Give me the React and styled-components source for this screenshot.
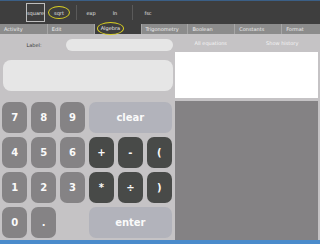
import React from 'react'
import styled, { createGlobalStyle } from 'styled-components'

const GlobalStyle = createGlobalStyle`
  html, body {
    margin: 0;
    padding: 0;
    background: #c5c3c5;
  }
  body {
    font-family: "DejaVu Sans", "Liberation Sans", sans-serif;
  }
`

const Screen = styled.div`
  width: 320px;
  height: 244px;
  display: flex;
  flex-direction: column;
  overflow: hidden;
  background: #c5c3c5;
`

const Toolbar = styled.div`
  height: 24px;
  display: flex;
  align-items: center;
  padding-left: 26px;
  background: #3e3e3e;
  border-top: 1px solid #3b5f86;
  box-sizing: border-box;
`

const ToolButton = styled.div`
  width: ${p => p.width || 24}px;
  height: ${p => p.boxed ? 19 : 13}px;
  margin-left: ${p => p.offset || 0}px;
  display: flex;
  align-items: center;
  justify-content: center;
  box-sizing: border-box;
  color: #e6e6e6;
  font-size: 5px;
  white-space: nowrap;
  border: ${p => p.boxed ? '1px solid #bdbdbd' : p.circled ? '1px solid #d9cf22' : 'none'};
  border-radius: ${p => p.circled ? '50%' : '0'};
`

const Separator = styled.div`
  width: 1px;
  height: 15px;
  margin-left: ${p => p.offset || 0}px;
  background: #5a5a5a;
`

const TabBar = styled.div`
  height: 10px;
  display: flex;
  background: #8c8c8c;
`

const Tab = styled.div`
  width: ${p => p.width || 47}px;
  display: flex;
  align-items: center;
  padding-left: ${p => p.active ? 2 : 4}px;
  box-sizing: border-box;
  font-size: 5px;
  color: #ececec;
  background: ${p => p.active ? '#3e3e3e' : '#8c8c8c'};
  border-left: ${p => p.first ? 'none' : '1px solid #a6a6a6'};
  white-space: nowrap;
`

const Circled = styled.span`
  display: inline-flex;
  align-items: center;
  height: 11px;
  margin-top: -2px;
  padding: 0 3px;
  border: 1px solid #d9cf22;
  border-radius: 50%;
`

const Body = styled.div`
  flex: 1;
  display: flex;
  min-height: 0;
`

const LeftPanel = styled.div`
  width: 175px;
  padding: 4px 2px 0 2px;
  box-sizing: border-box;
  display: flex;
  flex-direction: column;
`

const LabelRow = styled.div`
  display: flex;
  align-items: center;
  height: 12px;
  margin-top: 1px;
`

const LabelText = styled.div`
  width: 64px;
  font-size: 5px;
  color: #3a3a3a;
  text-align: center;
`

const LabelInput = styled.div`
  flex: 1;
  height: 12px;
  margin-right: 0;
  border-radius: 6px;
  background: #e6e6e6;
`

const Display = styled.div`
  height: 31px;
  margin: 9px 0 0 1px;
  border-radius: 8px;
  background: #e6e6e6;
`

const Keypad = styled.div`
  margin-top: 11px;
  width: 170px;
  display: grid;
  grid-template-columns: repeat(6, 1fr);
  grid-auto-rows: 31px;
  column-gap: 3.5px;
  row-gap: 4px;
`

const tones = {
  num: '#858385',
  op: '#484a48',
  wide: '#b2b3bb',
}

const Key = styled.div`
  grid-column: span ${p => p.span || 1};
  display: flex;
  align-items: center;
  justify-content: center;
  border-radius: 7px;
  background: ${p => tones[p.tone]};
  color: #fafafa;
  font-weight: bold;
  font-size: 10px;
`

const RightPanel = styled.div`
  flex: 1;
  margin-right: 2px;
  display: flex;
  flex-direction: column;
`

const HistoryHeader = styled.div`
  height: 18px;
  display: flex;
  align-items: center;
`

const HeaderLink = styled.div`
  flex: 1;
  text-align: center;
  font-size: 5px;
  color: #f4f4f4;
`

const EquationList = styled.div`
  height: 46px;
  background: #ffffff;
`

const Canvas = styled.div`
  flex: 1;
  margin-top: 3px;
  background: #848284;
`

const Footer = styled.div`
  height: 4px;
  background: #4a8bcb;
`

const keys = [
  { label: '7', tone: 'num' },
  { label: '8', tone: 'num' },
  { label: '9', tone: 'num' },
  { label: 'clear', tone: 'wide', span: 3 },
  { label: '4', tone: 'num' },
  { label: '5', tone: 'num' },
  { label: '6', tone: 'num' },
  { label: '+', tone: 'op' },
  { label: '-', tone: 'op' },
  { label: '(', tone: 'op' },
  { label: '1', tone: 'num' },
  { label: '2', tone: 'num' },
  { label: '3', tone: 'num' },
  { label: '*', tone: 'op' },
  { label: '÷', tone: 'op' },
  { label: ')', tone: 'op' },
  { label: '0', tone: 'num' },
  { label: '.', tone: 'num' },
  { label: '', tone: null },
  { label: 'enter', tone: 'wide', span: 3 },
]

const tabs = ['Activity', 'Edit', 'Algebra', 'Trigonometry', 'Boolean', 'Constants', 'Format']

export default function App() {
  return (
    <Screen>
      <GlobalStyle />
      <Toolbar>
        <ToolButton boxed width={19}>square</ToolButton>
        <ToolButton circled width={22} offset={3}>sqrt</ToolButton>
        <Separator offset={6} />
        <ToolButton offset={2}>exp</ToolButton>
        <ToolButton>ln</ToolButton>
        <Separator offset={5} />
        <ToolButton offset={3}>fsc</ToolButton>
      </Toolbar>
      <TabBar>
        {tabs.map((t, i) => (
          <Tab key={t} first={i === 0} active={t === 'Algebra'} width={i === 6 ? 39 : 47}>
            {t === 'Algebra' ? <Circled>{t}</Circled> : t}
          </Tab>
        ))}
      </TabBar>
      <Body>
        <LeftPanel>
          <LabelRow>
            <LabelText>Label:</LabelText>
            <LabelInput />
          </LabelRow>
          <Display />
          <Keypad>
            {keys.map((k, i) => (
              k.tone
                ? <Key key={i} tone={k.tone} span={k.span}>{k.label}</Key>
                : <div key={i} />
            ))}
          </Keypad>
        </LeftPanel>
        <RightPanel>
          <HistoryHeader>
            <HeaderLink>All equations</HeaderLink>
            <HeaderLink>Show history</HeaderLink>
          </HistoryHeader>
          <EquationList />
          <Canvas />
        </RightPanel>
      </Body>
      <Footer />
    </Screen>
  )
}
